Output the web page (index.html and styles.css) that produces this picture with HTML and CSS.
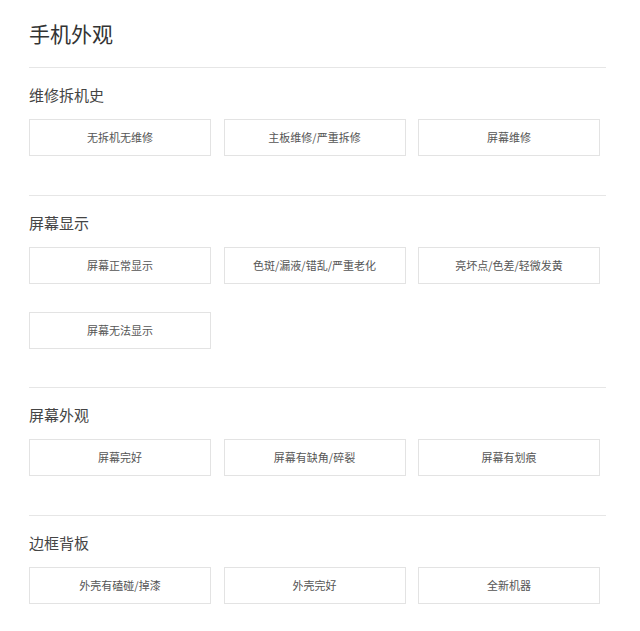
FILE: index.html
```html
<!DOCTYPE html>
<html lang="zh-CN">
<head>
    <meta charset="UTF-8">
    <meta name="viewport" content="width=device-width, initial-scale=1.0">
    <title>手机外观</title>
    <link rel="stylesheet" href="styles.css">
</head>
<body>
    <div class="wrap">
        <h1>手机外观</h1>

        <div class="group">
            <h2>维修拆机史</h2>
            <div class="options">
                <div class="option">无拆机无维修</div>
                <div class="option">主板维修/严重拆修</div>
                <div class="option">屏幕维修</div>
            </div>
        </div>

        <div class="group">
            <h2>屏幕显示</h2>
            <div class="options">
                <div class="option">屏幕正常显示</div>
                <div class="option">色斑/漏液/错乱/严重老化</div>
                <div class="option">亮坏点/色差/轻微发黄</div>
                <div class="option">屏幕无法显示</div>
            </div>
        </div>

        <div class="group">
            <h2>屏幕外观</h2>
            <div class="options">
                <div class="option">屏幕完好</div>
                <div class="option">屏幕有缺角/碎裂</div>
                <div class="option">屏幕有划痕</div>
            </div>
        </div>

        <div class="group">
            <h2>边框背板</h2>
            <div class="options">
                <div class="option">外壳有磕碰/掉漆</div>
                <div class="option">外壳完好</div>
                <div class="option">全新机器</div>
            </div>
        </div>
    </div>
</body>
</html>
```

FILE: styles.css
```css
* {
    margin: 0;
    padding: 0;
    box-sizing: border-box;
}

body {
    background-color: #fff;
    color: #333;
    font-family: "Noto Sans CJK SC", "Noto Sans", sans-serif;
}

.wrap {
    width: 577px;
    margin-left: 29px;
    padding-top: 18px;
}

h1 {
    font-size: 21px;
    font-weight: 400;
    line-height: 30px;
    color: #333;
    margin-bottom: 19px;
}

.group {
    border-top: 1px solid #e6e6e6;
    padding: 15px 0 38.6px;
}

h2 {
    font-size: 15px;
    font-weight: 400;
    line-height: 24px;
    color: #444;
    margin-bottom: 12px;
}

.options {
    display: grid;
    grid-template-columns: repeat(3, 182px);
    column-gap: 12.5px;
    row-gap: 28px;
}

.option {
    height: 37px;
    border: 1px solid #e3e3e3;
    font-size: 11px;
    line-height: 35px;
    text-align: center;
    color: #555;
}
```
